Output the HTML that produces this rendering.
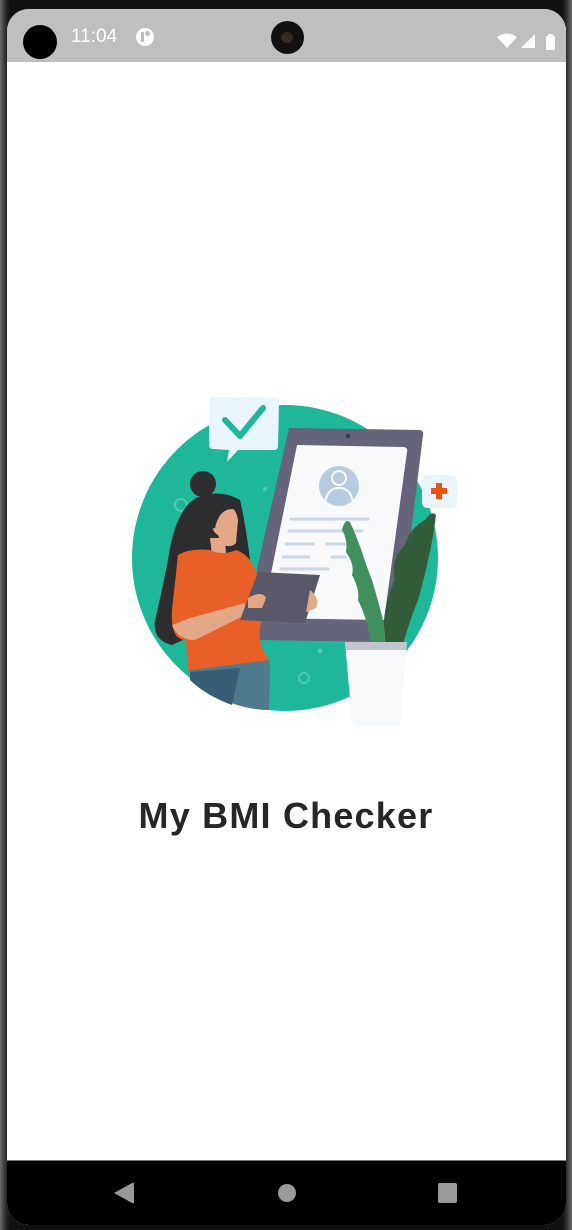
<!DOCTYPE html>
<html><head><meta charset="utf-8"><style>
html,body{margin:0;padding:0;width:572px;height:1230px;overflow:hidden;background:#1a1a1a;font-family:"Liberation Sans",sans-serif}
.frame{position:absolute;left:0;top:0;width:572px;height:1230px;background:linear-gradient(90deg,#6b6b6b 0,#2a2a2a 6px,#111 10px,#111 562px,#2a2a2a 566px,#6b6b6b 572px)}
.screen{position:absolute;left:7px;top:9px;width:559px;height:1216px;border-radius:22px;overflow:hidden;background:#fff}
.status{position:absolute;left:0;top:0;width:100%;height:53px;background:#bfbfbf}
.nav{position:absolute;left:0;top:1151px;width:100%;height:65px;background:#000;border-top:1px solid #777}
.title{position:absolute;left:0;width:572px;top:795px;text-align:center;font-size:36px;font-weight:bold;color:#262626;letter-spacing:1.2px}
</style></head><body>
<div class="frame"></div>
<div class="screen">
 <div class="status">
  <div style="position:absolute;left:16px;top:16px;width:34px;height:34px;border-radius:50%;background:#000"></div>
  <div style="position:absolute;left:64px;top:17px;color:#fff;font-size:19px">11:04</div>
  <div style="position:absolute;left:129px;top:19px;width:18px;height:18px;border-radius:50%;background:#fff"><div style="position:absolute;left:5px;top:4px;width:3px;height:10px;background:#bfbfbf"></div><div style="position:absolute;left:9px;top:3px;width:5px;height:5px;border-radius:50%;background:#bfbfbf"></div></div>
  <div style="position:absolute;left:264px;top:12px;width:33px;height:33px;border-radius:50%;background:#111"><div style="position:absolute;left:10px;top:11px;width:12px;height:11px;border-radius:50%;background:#3a2a1a"></div></div>
  <svg style="position:absolute;left:490px;top:24px" width="60" height="22" viewBox="0 0 60 22">
   <path d="M0 4 Q10 -3 20 4 L10 15 Z" fill="#fff"/>
   <path d="M24 15 L38 1 L38 15 Z" fill="#fff"/>
   <rect x="49" y="3" width="9" height="14" rx="1" fill="#fff"/><rect x="51" y="1" width="5" height="3" fill="#fff"/>
  </svg>
 </div>
 <div class="nav">
  <svg width="559" height="65" viewBox="0 0 559 65">
   <path d="M107 32 L125 22 Q127 21 127 23 L127 41 Q127 43 125 42 Z" fill="#999"/>
   <circle cx="280" cy="32" r="9" fill="#999"/>
   <rect x="431" y="22" width="19" height="20" rx="2" fill="#999"/>
  </svg>
 </div>
</div>
<svg style="position:absolute;left:0;top:0" width="572" height="1230" viewBox="0 0 572 1230">
 <circle cx="285" cy="558" r="153" fill="#1eb799"/>
 <circle cx="181" cy="505" r="6" fill="none" stroke="#4fcab0" stroke-width="2"/>
 <circle cx="304" cy="678" r="5" fill="none" stroke="#4fcab0" stroke-width="2"/>
 <circle cx="265" cy="489" r="2" fill="#4fcab0"/>
 <path d="M320 648 l3 3 -3 3 -3 -3z" fill="#4fcab0"/>
 <path d="M289 428 L420 430 Q424 431 423 435 L398 638 Q397 642 393 642 L256 640 L250 600 Z" fill="#656579"/>
 <path d="M297 445 L404 447 Q408 448 407 452 L384 620 L262 618 Z" fill="#f8f9fb"/>
 <circle cx="348" cy="436" r="2.5" fill="#3f3f50"/>
 <circle cx="339" cy="486" r="20" fill="#b7cbe0"/>
 <circle cx="339" cy="478" r="7" fill="none" stroke="#f8f9fb" stroke-width="2"/>
 <path d="M325 503 Q327 488 339 488 Q351 488 353 503" fill="none" stroke="#f8f9fb" stroke-width="2"/>
 <g stroke="#c9d7e6" stroke-width="3" stroke-linecap="round">
  <line x1="291" y1="519" x2="368" y2="519"/><line x1="289" y1="531" x2="362" y2="531"/>
  <line x1="286" y1="544" x2="313" y2="544"/><line x1="327" y1="544" x2="345" y2="544"/>
  <line x1="283" y1="557" x2="309" y2="557"/><line x1="332" y1="557" x2="345" y2="557"/>
  <line x1="281" y1="569" x2="328" y2="569"/>
 </g>
 <path d="M196 498 Q175 510 168 560 Q160 600 155 620 Q152 640 172 645 L205 630 L250 560 Q245 520 240 500 Q220 488 196 498Z" fill="#2d2d30"/>
 <circle cx="203" cy="484" r="13" fill="#2d2d30"/>
 <path d="M212 504 Q235 500 238 520 L236 543 Q232 548 222 545 L218 535 Q208 530 212 504Z" fill="#e3a887"/>
 <path d="M200 500 Q225 490 238 510 Q220 505 215 528 L205 530 Z" fill="#2d2d30"/>
 <path d="M210 538 L225 538 L226 555 L212 555Z" fill="#e3a887"/>
 <path d="M178 555 Q190 548 210 550 Q222 556 236 550 Q252 555 258 578 L262 620 Q255 640 268 658 L270 662 Q230 668 188 672 L186 640 Q170 640 172 610 Z" fill="#e95f28"/>
 <path d="M190 670 L270 660 L269 710 Q230 710 190 680Z" fill="#4f7a8d"/>
 <path d="M190 672 L240 668 L232 705 Q205 695 190 680Z" fill="#375e74"/>
 <path d="M172 625 Q178 640 195 640 L245 615 L245 603 L190 618Z" fill="#e3a887"/>
 <path d="M258 572 L320 575 L305 623 L240 620 Z" fill="#585868"/>
 <path d="M248 598 Q262 590 266 598 L262 608 L248 608Z" fill="#e3a887"/>
 <path d="M310 590 Q320 598 316 608 L306 612Z" fill="#e3a887"/>
 <path d="M213 397 L276 398 Q280 398 279 402 L278 446 Q278 450 274 450 L238 450 L227 462 L229 450 L213 449 Q209 449 209 445 L209 401 Q209 397 213 397Z" fill="#eaf4fb"/>
 <path d="M225 420 L240 436 L263 408" fill="none" stroke="#1eb799" stroke-width="6" stroke-linecap="round" stroke-linejoin="round"/>
 <rect x="422" y="475" width="35" height="33" rx="5" fill="#eaf4fb"/>
 <path d="M436 483 h6 v5 h5 v6 h-5 v5 h-6 v-5 h-5 v-6 h5z" fill="#f2540f"/>
 <path d="M385 648 Q380 610 395 580 Q390 560 405 545 Q410 528 425 520 Q432 510 436 515 Q433 540 428 560 Q424 580 418 600 Q408 625 402 648Z" fill="#325b39"/>
 <path d="M372 648 Q368 620 358 600 Q360 590 352 575 Q355 565 346 552 Q348 540 342 530 Q345 518 350 522 Q356 535 362 552 Q366 565 372 580 Q378 600 383 620 Q386 635 385 648Z" fill="#428f5e"/>
 <path d="M345 642 L407 642 L400 724 Q397 727 393 727 L358 727 Q353 727 352 722Z" fill="#f8f9fb"/>
 <path d="M345 642 L407 642 L406 650 L346 650Z" fill="#9ea4ad" opacity="0.6"/>
</svg>
<div class="title">My BMI Checker</div>
</body></html>
